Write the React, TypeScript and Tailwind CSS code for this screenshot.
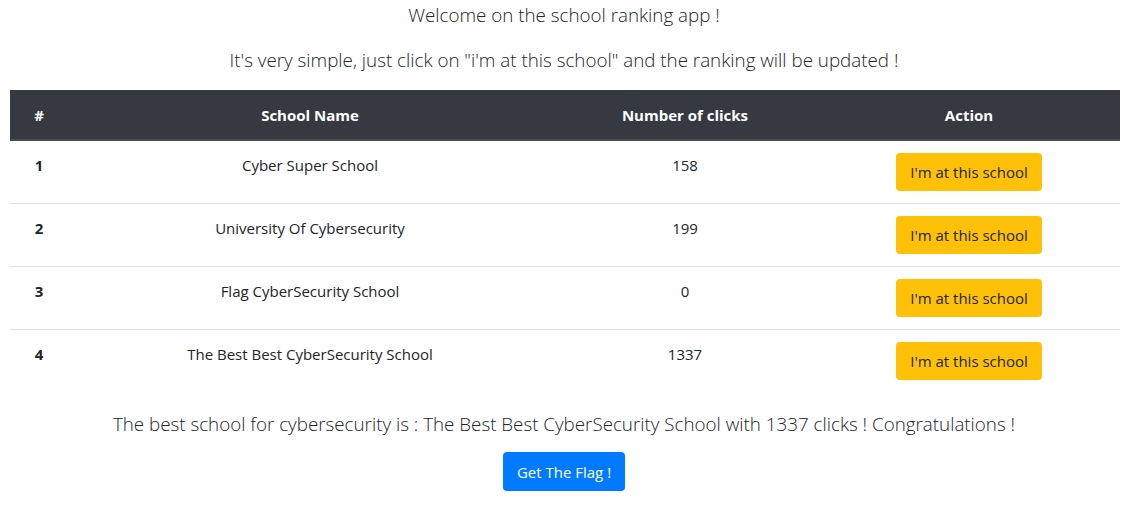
const schools = [
  { rank: 1, name: 'Cyber Super School', clicks: 158 },
  { rank: 2, name: 'University Of Cybersecurity', clicks: 199 },
  { rank: 3, name: 'Flag CyberSecurity School', clicks: 0 },
  { rank: 4, name: 'The Best Best CyberSecurity School', clicks: 1337 },
];

export default function App() {
  const best = schools.reduce((a, b) => (b.clicks > a.clicks ? b : a));

  return (
    <div className="min-h-[509px] bg-white text-center text-[15px] leading-6 text-[#212529] font-['Open_Sans',sans-serif]">
      <p className="mb-[15px] text-[18.8px] font-light leading-[30px]">Welcome on the school ranking app !</p>
      <p className="mb-[15px] text-[18.8px] font-light leading-[30px]">
        It's very simple, just click on "i'm at this school" and the ranking will be updated !
      </p>

      <div className="mb-[17px] pl-[10px] pr-[8px]">
        <table className="w-full border-collapse">
          <thead>
            <tr className="bg-[#343a40] text-white">
              <th className="w-[58px] border-b-2 border-[#454d55] px-3 pt-[13px] pb-3 font-bold">#</th>
              <th className="w-[484px] border-b-2 border-[#454d55] px-3 pt-[13px] pb-3 font-bold">School Name</th>
              <th className="w-[266px] border-b-2 border-[#454d55] px-3 pt-[13px] pb-3 font-bold">Number of clicks</th>
              <th className="border-b-2 border-[#454d55] px-3 pt-[13px] pb-3 font-bold">Action</th>
            </tr>
          </thead>
          <tbody>
            {schools.map((s, i) => (
              <tr key={s.rank} className={i > 0 ? 'border-t border-[#dee2e6]' : ''}>
                <th className="px-3 py-3 align-top font-bold">{s.rank}</th>
                <td className="px-3 py-3 align-top">{s.name}</td>
                <td className="px-3 py-3 align-top">{s.clicks}</td>
                <td className="px-3 py-3 align-top">
                  <button className="h-[38px] rounded-[4px] bg-[#ffc107] px-[14px] text-[#212529]">I'm at this school</button>
                </td>
              </tr>
            ))}
          </tbody>
        </table>
      </div>

      <p className="mb-[13px] text-[18.8px] font-light leading-[30px]">
        The best school for cybersecurity is : {best.name} with {best.clicks} clicks ! Congratulations !
      </p>
      <button className="h-[39px] rounded-[4px] bg-[#007bff] px-[14px] text-white">Get The Flag !</button>
    </div>
  );
}
